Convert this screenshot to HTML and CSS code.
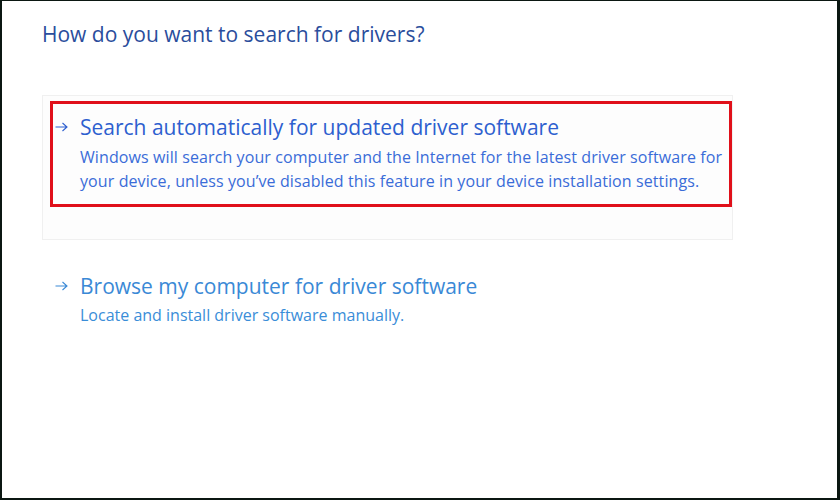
FILE: index.html
```html
<!DOCTYPE html>
<html>
<head>
<meta charset="utf-8">
<link rel="stylesheet" href="styles.css">
</head>
<body>
<div class="frame">
  <h1 class="title">How do you want to search for drivers?</h1>
  <div class="panel">
    <div class="highlight">
      <div class="option option-primary">
        <span class="arrow"><svg width="13" height="10" viewBox="0 0 13 10"><path d="M0.5 5 H12 M7.5 1 L12 5 L7.5 9" fill="none" stroke="currentColor" stroke-width="1.1"/></svg></span>
        <div class="text">
          <div class="heading">Search automatically for updated driver software</div>
          <div class="desc">Windows will search your computer and the Internet for the latest driver software for<br>your device, unless you’ve disabled this feature in your device installation settings.</div>
        </div>
      </div>
    </div>
  </div>
  <div class="option option-secondary">
    <span class="arrow"><svg width="13" height="10" viewBox="0 0 13 10"><path d="M0.5 5 H12 M7.5 1 L12 5 L7.5 9" fill="none" stroke="currentColor" stroke-width="1.1"/></svg></span>
    <div class="text">
      <div class="heading">Browse my computer for driver software</div>
      <div class="desc">Locate and install driver software manually.</div>
    </div>
  </div>
</div>
</body>
</html>
```
FILE: styles.css
```css
html, body {
  margin: 0;
  padding: 0;
  background: #ffffff;
}
.frame {
  box-sizing: border-box;
  width: 840px;
  height: 500px;
  border-style: solid;
  border-color: #0b1712;
  border-width: 1px 3px 2px 2px;
  padding: 0 0 0 40px;
  font-family: "Open Sans", "Noto Sans", sans-serif;
  background: #fff;
}
.title {
  margin: 19px 0 0 0;
  font-size: 21px;
  font-weight: 400;
  color: #2a4d9c;
  line-height: 28px;
}
.panel {
  box-sizing: border-box;
  width: 691px;
  height: 145px;
  margin-top: 47px;
  border: 1px solid #f0f0f0;
  padding: 5px 0 0 7px;
  background: #fdfdfd;
}
.highlight {
  box-sizing: border-box;
  width: 682px;
  height: 106px;
  border: 3px solid #e0101a;
  padding: 9px 0 0 2px;
}
.option {
  display: flex;
  align-items: flex-start;
}
.arrow {
  display: flex;
  align-items: center;
  width: 25px;
  height: 28px;
}
.arrow svg {
  display: block;
}
.heading {
  font-size: 21px;
  line-height: 28px;
}
.desc {
  font-size: 16px;
  line-height: 24px;
  margin-top: 4px;
}
.option-primary .desc {
  letter-spacing: 0.1px;
}
.option-primary .arrow,
.option-primary .heading {
  color: #2d5fcf;
}
.option-primary .desc {
  color: #3a6cd8;
}
.option-secondary {
  margin: 32px 0 0 13px;
}
.option-secondary .desc {
  margin-top: 3px;
}
.option-secondary .arrow,
.option-secondary .heading {
  color: #3a89d6;
}
.option-secondary .desc {
  color: #3a8dd8;
}
```
